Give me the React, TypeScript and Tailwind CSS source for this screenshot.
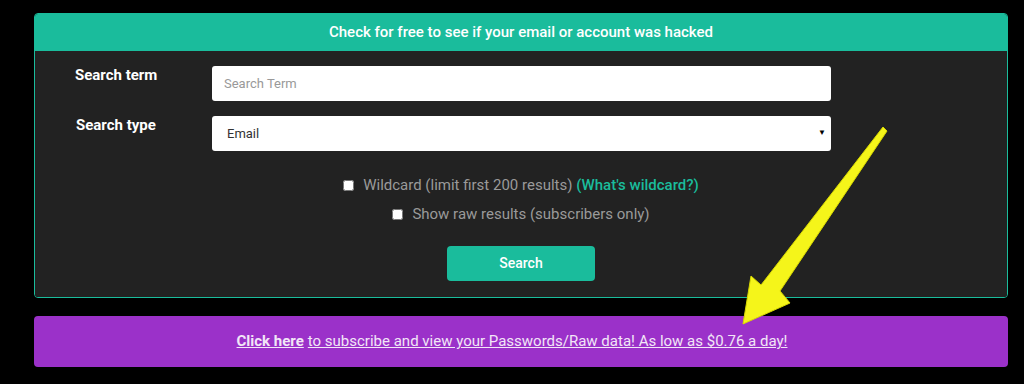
import { useState } from 'react';

const Arrow = () => (
  <svg
    className="absolute left-0 top-0 pointer-events-none"
    width="1024"
    height="384"
    viewBox="0 0 1024 384"
  >
    <polygon
      points="883,127 887,131 780,291 790,303 743,324 751,276 761,285"
      fill="#f5f51a"
      stroke="#d8d800"
      strokeWidth="1"
      strokeLinejoin="round"
    />
  </svg>
);

const App = () => {
  const [wildcard, setWildcard] = useState(false);
  const [raw, setRaw] = useState(false);

  return (
    <div
      className="relative w-[1024px] h-[384px] bg-black pt-[13px] pl-[34px] pr-[16px]"
      style={{ fontFamily: 'Roboto, "Liberation Sans", sans-serif' }}
    >
      {/* Search card */}
      <div className="rounded-[4px] border border-[#1abc9c] overflow-hidden">
        <div className="bg-[#1abc9c] h-[37px] flex items-center justify-center text-white text-[15px] font-medium">
          Check for free to see if your email or account was hacked
        </div>

        <div className="bg-[#222222] h-[246px] pt-[15px]">
          <div className="flex items-center h-[35px]">
            <label className="w-[177px] pl-[40px] -mt-[16px] text-white text-[15px] font-bold">Search term</label>
            <input
              type="text"
              placeholder="Search Term"
              className="w-[619px] h-[35px] rounded-[3px] bg-white px-[12px] text-[13px] text-gray-700 placeholder:text-[#999] outline-none"
            />
          </div>

          <div className="flex items-center h-[35px] mt-[15px]">
            <label className="w-[177px] pl-[41px] -mt-[16px] text-white text-[15px] font-bold">Search type</label>
            <div className="relative w-[619px] h-[35px] rounded-[3px] bg-white flex items-center px-[15px] text-[13px] text-[#333]">
              Email
              <span className="absolute right-[5px] top-[11px] text-[8px] text-black">▼</span>
            </div>
          </div>

          <div className="flex flex-col items-center mt-[26px] text-[15px] text-[#9a9a9a]">
            <label className="flex items-center gap-[9px] h-[16px]">
              <input
                type="checkbox"
                checked={wildcard}
                onChange={() => setWildcard(!wildcard)}
                className="w-[11px] h-[11px] accent-[#1abc9c]"
              />
              <span>
                Wildcard (limit first 200 results){' '}
                <a href="#" className="text-[#1abc9c] font-medium">(What's wildcard?)</a>
              </span>
            </label>
            <label className="flex items-center gap-[9px] h-[16px] mt-[13px]">
              <input
                type="checkbox"
                checked={raw}
                onChange={() => setRaw(!raw)}
                className="w-[11px] h-[11px] accent-[#1abc9c]"
              />
              <span>Show raw results (subscribers only)</span>
            </label>

            <button className="mt-[24px] w-[148px] h-[35px] rounded-[4px] bg-[#1abc9c] text-white text-[14px] font-medium">
              Search
            </button>
          </div>
        </div>
      </div>

      {/* Subscribe banner */}
      <a
        href="#"
        className="mt-[18px] h-[51px] pr-[18px] rounded-[4px] bg-[#9b31c9] flex items-center justify-center text-[#f2e6f7] text-[15px] underline"
      >
        <b className="font-bold mr-[4px]">Click here</b> to subscribe and view your Passwords/Raw data! As low as $0.76 a day!
      </a>

      <Arrow />
    </div>
  );
};

export default App;
